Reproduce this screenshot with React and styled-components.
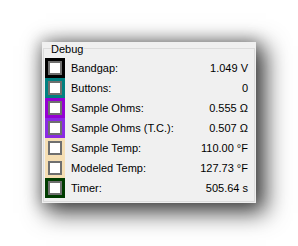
import React from "react";
import styled, { createGlobalStyle } from "styled-components";

const Global = createGlobalStyle`
  html, body { margin: 0; padding: 0; background: #ffffff; }
  body { font-family: "Liberation Sans", Arial, sans-serif; }
`;

const Page = styled.div`
  width: 298px;
  height: 246px;
  padding: 42px 0 0 42px;
  box-sizing: border-box;
  overflow: hidden;
`;

const Panel = styled.div`
  width: 214px;
  height: 161px;
  box-sizing: border-box;
  background: #f0f0f0;
  padding: 0 1px;
  box-shadow: 7px 7px 22px 3px rgba(0, 0, 0, 0.7),
    0 0 14px 2px rgba(0, 0, 0, 0.25);
`;

const GroupBox = styled.fieldset`
  margin: 0;
  padding: 3px 6px 0 1px;
  min-width: 0;
  border: 1px solid #dcdcdc;
  height: 160px;
  box-sizing: border-box;
`;

const Legend = styled.legend`
  margin-left: 6px;
  padding: 2px 1px 0 0;
  font-size: 11px;
  line-height: 11px;
  color: #000;
`;

const Row = styled.div`
  display: flex;
  align-items: center;
  height: 20px;
  font-size: 11px;
  line-height: 20px;
  color: #000;
`;

const Swatch = styled.div`
  width: 20px;
  height: 20px;
  flex: none;
  box-sizing: border-box;
  padding: 3px;
  background: ${(p) => p.$color};
`;

const Check = styled.div`
  width: 14px;
  height: 14px;
  box-sizing: border-box;
  border: 2px solid #6f6f6f;
  background: #ffffff;
`;

const Label = styled.span`
  margin-left: 6px;
  white-space: nowrap;
`;

const Value = styled.span`
  margin-left: auto;
  white-space: nowrap;
`;

const rows = [
  { color: "#000000", label: "Bandgap:", value: "1.049 V" },
  { color: "#008080", label: "Buttons:", value: "0" },
  { color: "#9400d3", label: "Sample Ohms:", value: "0.555 Ω" },
  { color: "#8a2be2", label: "Sample Ohms (T.C.):", value: "0.507 Ω" },
  { color: "#f5deb3", label: "Sample Temp:", value: "110.00 °F" },
  { color: "#f5deb3", label: "Modeled Temp:", value: "127.73 °F" },
  { color: "#003c00", label: "Timer:", value: "505.64 s" },
];

export default function App() {
  return (
    <>
      <Global />
      <Page>
        <Panel>
          <GroupBox>
            <Legend>Debug</Legend>
            {rows.map((r) => (
              <Row key={r.label}>
                <Swatch $color={r.color}>
                  <Check />
                </Swatch>
                <Label>{r.label}</Label>
                <Value>{r.value}</Value>
              </Row>
            ))}
          </GroupBox>
        </Panel>
      </Page>
    </>
  );
}
